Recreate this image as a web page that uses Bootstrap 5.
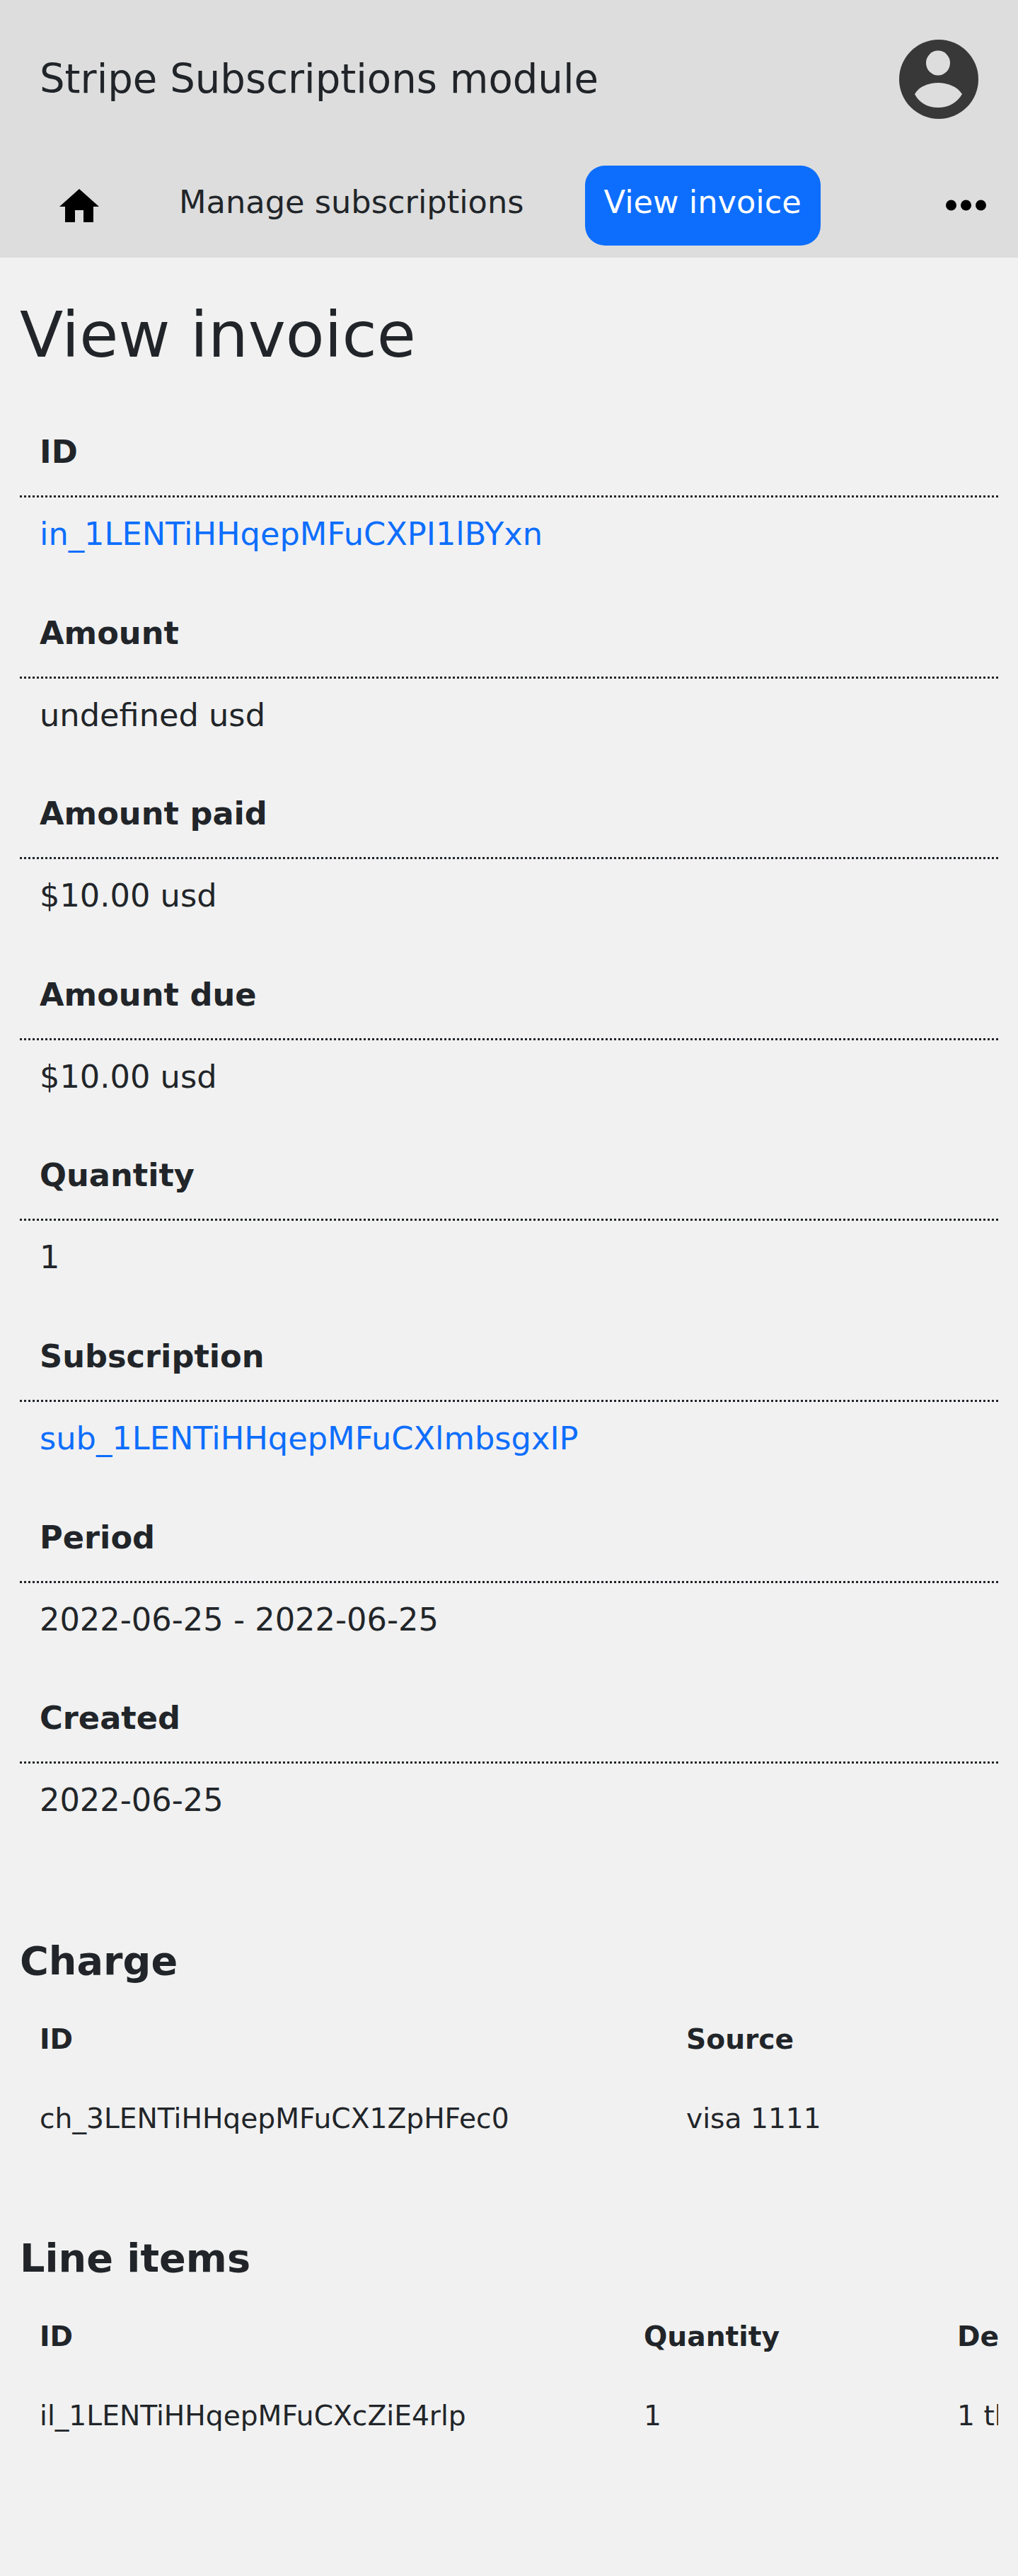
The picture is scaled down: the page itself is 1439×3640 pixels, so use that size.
<!DOCTYPE html>
<html lang="en">

<head>
    <meta charset="UTF-8">
    <meta name="viewport" content="width=device-width, initial-scale=1.0">
    <title>View invoice</title>
    <link href="https://cdn.jsdelivr.net/npm/bootstrap@5.3.0/dist/css/bootstrap.min.css" rel="stylesheet">
    <style>
        body {
            font-family: "DejaVu Sans", sans-serif;
            font-size: 44.7px;
            line-height: 66px;
            background: #f1f1f1;
            color: #212529;
        }

        .site-head {
            background: #ddd;
            height: 364px;
        }

        .head-top {
            height: 234px;
            padding: 56px 56px 0 56px;
        }

        .site-title {
            font-size: 56.1px;
            line-height: 112px;
        }

        .head-nav {
            padding: 0 18px 0 57px;
            gap: 59px;
        }

        .head-nav .nav-link {
            height: 113px;
            padding: 27px;
            color: #212529;
            line-height: 50px;
        }

        .head-nav .nav-link.active {
            color: #fff;
            background: #0d6efd;
            border-radius: 28px;
        }

        .home-svg {
            margin-top: 6px;
        }

        .page-title {
            font-size: 89.6px;
            line-height: 107px;
            margin: 56px 0 51px;
            font-weight: 400;
        }

        .page-body {
            padding: 0 28px;
        }

        .inv-label {
            padding: 28px 28px 28px;
            font-weight: 700;
            border-bottom: 3px dotted #212529;
        }

        .inv-value {
            padding: 19px 28px 45.6px;
        }

        .inv-value a {
            color: #0d6efd;
            text-decoration: none;
        }

        .sub-head {
            font-size: 55.7px;
            font-weight: 700;
            line-height: 69px;
            margin: 0 0 21px;
        }

        .sub-charge {
            margin-top: 113px;
        }

        .sub-lines {
            margin-top: 106px;
        }

        .inv-table {
            --bs-table-bg: transparent;
            font-size: 39.2px;
            margin: 0;
        }

        .inv-table th,
        .inv-table td {
            padding: 28px;
            border: 0;
            line-height: 56px;
            white-space: nowrap;
        }

        .col-charge-id { width: 914px; }
        .col-line-id { min-width: 854px; }
        .col-line-qty { min-width: 443px; }
    </style>
</head>

<body>
    <header class="site-head">
        <div class="head-top d-flex justify-content-between">
            <div class="site-title">Stripe Subscriptions module</div>
            <svg width="112" height="112" viewBox="0 0 112 112">
                <circle cx="56" cy="56" r="56" fill="#383838"/>
                <ellipse cx="55" cy="33" rx="17" ry="17.5" fill="#ddd"/>
                <path d="M22 77C28 66 42 61 55 61C68 61 82 66 89 77C82 89 70 96 55 96C40 96 28 89 22 77Z" fill="#ddd"/>
            </svg>
        </div>
        <nav class="nav head-nav align-items-start">
            <a class="nav-link d-flex align-items-start" href="#">
                <svg class="home-svg" width="56" height="47" viewBox="0 0 56 47">
                    <path d="M28 0L56 25H48V47H34V30H22V47H8V25H0Z"/>
                </svg>
            </a>
            <a class="nav-link" href="#">Manage subscriptions</a>
            <a class="nav-link active" href="#">View invoice</a>
            <a class="nav-link ms-auto d-flex align-items-start" href="#">
                <svg width="57" height="70" viewBox="0 0 57 70">
                    <circle cx="7.5" cy="29" r="7.5"/>
                    <circle cx="28.5" cy="29" r="7.5"/>
                    <circle cx="49.5" cy="29" r="7.5"/>
                </svg>
            </a>
        </nav>
    </header>

    <main class="page-body">
        <h1 class="page-title">View invoice</h1>
        <div>
            <div class="inv-label">ID</div>
            <div class="inv-value"><a href="#">in_1LENTiHHqepMFuCXPI1lBYxn</a></div>
            <div class="inv-label">Amount</div>
            <div class="inv-value">undefined usd</div>
            <div class="inv-label">Amount paid</div>
            <div class="inv-value">$10.00 usd</div>
            <div class="inv-label">Amount due</div>
            <div class="inv-value">$10.00 usd</div>
            <div class="inv-label">Quantity</div>
            <div class="inv-value">1</div>
            <div class="inv-label">Subscription</div>
            <div class="inv-value"><a href="#">sub_1LENTiHHqepMFuCXlmbsgxIP</a></div>
            <div class="inv-label">Period</div>
            <div class="inv-value">2022-06-25 - 2022-06-25</div>
            <div class="inv-label">Created</div>
            <div class="inv-value">2022-06-25</div>
        </div>

        <h3 class="sub-head sub-charge">Charge</h3>
        <div class="table-responsive">
            <table class="table inv-table">
                <thead>
                    <tr><th class="col-charge-id">ID</th><th>Source</th></tr>
                </thead>
                <tbody>
                    <tr><td>ch_3LENTiHHqepMFuCX1ZpHFec0</td><td>visa 1111</td></tr>
                </tbody>
            </table>
        </div>

        <h3 class="sub-head sub-lines">Line items</h3>
        <div class="table-responsive">
            <table class="table inv-table">
                <thead>
                    <tr><th class="col-line-id">ID</th><th class="col-line-qty">Quantity</th><th>Description</th></tr>
                </thead>
                <tbody>
                    <tr><td>il_1LENTiHHqepMFuCXcZiE4rlp</td><td>1</td><td>1 thing</td></tr>
                </tbody>
            </table>
        </div>
    </main>

    <script src="https://cdn.jsdelivr.net/npm/bootstrap@5.3.0/dist/js/bootstrap.bundle.min.js"></script>
</body>

</html>
